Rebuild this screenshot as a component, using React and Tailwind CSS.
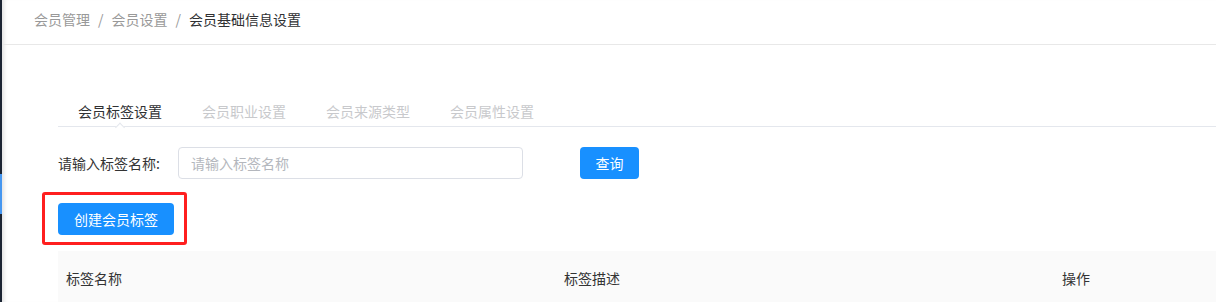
import React from "react";

const tabs = ["会员标签设置", "会员职业设置", "会员来源类型", "会员属性设置"];

export default function App() {
  return (
    <div
      className="relative flex w-[1216px] h-[302px] overflow-hidden bg-white text-[14px]"
      style={{ fontFamily: '"Noto Sans CJK SC", "Noto Sans", sans-serif' }}
    >
      {/* sidebar edge */}
      <div className="flex w-[2px] shrink-0 flex-col bg-[#1b2433]">
        <div className="h-[174px]" />
        <div className="h-[40px] bg-[#4596f0]" />
      </div>

      <main className="flex-1 min-w-0 shadow-[inset_5px_0_4px_-3px_rgba(0,0,0,0.12)]">
        <header className="h-[45px] border-b border-[#e8e8e8] pl-[32px] pt-[8px] leading-[22px]">
          <span className="text-[#999]">会员管理</span>
          <span className="mx-[8px] text-[#999]">/</span>
          <span className="text-[#999]">会员设置</span>
          <span className="mx-[8px] text-[#999]">/</span>
          <span className="text-[#303133]">会员基础信息设置</span>
        </header>

        <section className="ml-[56px] mt-[45px]">
          <nav className="flex border-b border-[#e4e7ed]">
            {tabs.map((t, i) => (
              <div
                key={t}
                className={
                  "relative px-[20px] pt-[10px] pb-[4px] leading-[22px] " +
                  (i === 0 ? "text-[#303133]" : "text-[#c8c9cc]")
                }
              >
                {t}
                {i === 0 && (
                  <span className="absolute left-1/2 bottom-[-5px] h-[7px] w-[7px] -translate-x-1/2 rotate-45 border-l border-t border-[#e4e7ed] bg-white" />
                )}
              </div>
            ))}
          </nav>

          <div className="mt-[20px] flex items-center">
            <label className="w-[120px] text-[#333]">请输入标签名称:</label>
            <input
              className="h-[32px] w-[345px] rounded-[4px] border border-[#dcdfe6] px-[12px] text-[#333] outline-none placeholder:text-[#b4b7bd]"
              placeholder="请输入标签名称"
            />
            <button className="ml-[57px] h-[32px] w-[59px] rounded-[4px] bg-[#1890ff] text-white">
              查询
            </button>
          </div>

          <button className="mt-[24px] h-[32px] w-[116px] rounded-[4px] bg-[#1890ff] text-white">
            创建会员标签
          </button>

          <div className="mt-[16px] grid w-[1494px] grid-cols-3 bg-[#fafafa] text-[#333]">
            <div className="px-[8px] py-[16px] leading-[22px]">标签名称</div>
            <div className="px-[8px] py-[16px] leading-[22px]">标签描述</div>
            <div className="px-[8px] py-[16px] leading-[22px]">操作</div>
          </div>
        </section>
      </main>

      {/* annotation box */}
      <div className="absolute left-[42px] top-[192px] h-[53px] w-[145px] rounded-[3px] border-[3px] border-[#ff1f1f]" />
    </div>
  );
}
